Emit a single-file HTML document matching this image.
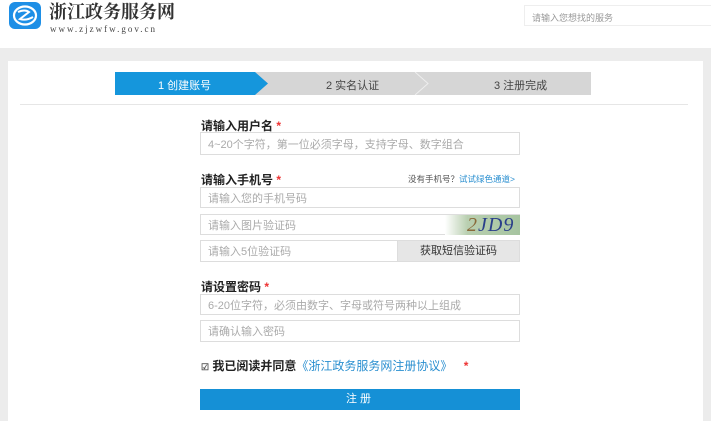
<!DOCTYPE html>
<html><head><meta charset="utf-8"><style>
*{margin:0;padding:0;box-sizing:border-box}
body{width:711px;height:421px;overflow:hidden;background:#fff;font-family:"Liberation Sans","Noto Sans CJK SC",sans-serif;position:relative;font-size:12px;color:#333}
.a{position:absolute}
.inp{position:absolute;left:200px;width:320px;border:1px solid #ddd;background:#fff;color:#aaa;font-size:11px;padding-left:7px;display:flex;align-items:center}
.lbl{position:absolute;left:201px;font-weight:bold;font-size:12px;color:#222}
.lbl span{color:#e33}
</style></head><body>
<div class="a" style="left:9px;top:2px;width:32px;height:27px;background:#1e8fe6;border-radius:6px"></div>
<svg class="a" style="left:9px;top:2px" width="32" height="27" viewBox="0 0 32 27"><ellipse cx="16" cy="13.5" rx="11" ry="9" fill="none" stroke="#fff" stroke-width="2.2"/><path d="M9 10 Q16 7 20 10 L11 17 Q17 19 24 15" fill="none" stroke="#fff" stroke-width="2"/></svg>
<div class="a" style="left:49px;top:0px;font-family:'Noto Serif CJK SC',serif;font-weight:bold;font-size:18px;color:#333;line-height:22px">浙江政务服务网</div>
<div class="a" style="left:50px;top:24px;font-family:'Liberation Serif',serif;font-size:9px;color:#444;letter-spacing:2px;line-height:10px">www.zjzwfw.gov.cn</div>
<div class="a" style="left:524px;top:5px;width:190px;height:21px;border:1px solid #eee;font-size:9px;color:#999;padding:5px 0 0 7px">请输入您想找的服务</div>
<div class="a" style="left:0;top:48px;width:711px;height:373px;background:#ececec"></div>
<div class="a" style="left:8px;top:61px;width:695px;height:360px;background:#fff"></div>
<div class="a" style="left:115px;top:72px;width:476px;height:23px;background:#d6d6d6"></div>
<svg class="a" style="left:115px;top:72px" width="476" height="23"><polygon points="0,0 140,0 153,11.5 140,23 0,23" fill="#1596dc"/><polyline points="300,0 313,11.5 300,23" fill="none" stroke="#eee" stroke-width="1"/></svg>
<div class="a" style="left:158px;top:77px;color:#fff;font-size:11px">1 创建账号</div>
<div class="a" style="left:326px;top:77px;color:#444;font-size:11px">2 实名认证</div>
<div class="a" style="left:494px;top:77px;color:#444;font-size:11px">3 注册完成</div>
<div class="a" style="left:20px;top:104px;width:668px;height:1px;background:#e6e6e6"></div>
<div class="lbl" style="top:117px">请输入用户名 <span>*</span></div>
<div class="inp" style="top:132px;height:23px">4~20个字符，第一位必须字母，支持字母、数字组合</div>
<div class="lbl" style="top:171px">请输入手机号 <span>*</span></div>
<div class="a" style="left:408px;top:173px;font-size:8.5px;color:#555">没有手机号？<span style="color:#2a8fd0">试试绿色通道&gt;</span></div>
<div class="inp" style="top:187px;height:21px">请输入您的手机号码</div>
<div class="inp" style="top:214px;height:21px">请输入图片验证码</div>
<div class="a" style="left:445px;top:215px;width:75px;height:20px;background:linear-gradient(90deg,#fff,#b9cfb0 30%,#a6c4a0);font-family:'Liberation Serif',serif;font-style:italic;font-size:20px;color:#2a3f8a;padding-left:22px;line-height:20px;letter-spacing:1px"><span style="color:#8a6a3a">2</span>JD9</div>
<div class="inp" style="top:240px;height:22px;width:198px">请输入5位验证码</div>
<div class="a" style="left:397px;top:240px;width:123px;height:22px;background:#e6e6e6;border:1px solid #ddd;font-size:11px;color:#333;text-align:center;line-height:20px">获取短信验证码</div>
<div class="lbl" style="top:278px">请设置密码 <span>*</span></div>
<div class="inp" style="top:294px;height:21px">6-20位字符，必须由数字、字母或符号两种以上组成</div>
<div class="inp" style="top:320px;height:22px">请确认输入密码</div>
<div class="a" style="left:201px;top:357px;font-size:12px;font-weight:bold;color:#222"><span style="font-size:9px;color:#555">☑</span> 我已阅读并同意<span style="color:#2a8fd0;font-weight:normal">《浙江政务服务网注册协议》</span> <span style="color:#e33;margin-left:8px">*</span></div>
<div class="a" style="left:200px;top:389px;width:320px;height:21px;background:#1590d6;color:#fff;text-align:center;line-height:21px;font-size:11px;letter-spacing:3px">注册</div>
</body></html>
